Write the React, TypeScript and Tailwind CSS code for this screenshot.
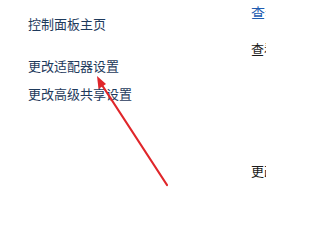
import React from 'react';

const NavLink: React.FC<{ label: string; className?: string }> = ({ label, className }) => (
    <div className={`h-[28px] leading-[28px] text-[13px] text-[#1e3a5c] whitespace-nowrap ${className ?? ''}`}>{label}</div>
);

const App: React.FC = () => (
    <div
        className="relative w-[266px] h-[217px] bg-white overflow-hidden flex"
        style={{ fontFamily: '"Noto Sans CJK SC", "Noto Sans", sans-serif' }}
    >
        <div className="w-[251px] shrink-0 pl-[28px] pt-[10px]">
            <NavLink label="控制面板主页" />
            <NavLink label="更改适配器设置" className="mt-[14px]" />
            <NavLink label="更改高级共享设置" />
        </div>
        <div className="shrink-0 flex flex-col whitespace-nowrap">
            <div className="h-[24px] leading-[24px] text-[14px] text-[#1e5bb0]">查看</div>
            <div className="mt-[13px] h-[24px] leading-[24px] text-[13px] text-[#1a1a1a]">查看</div>
            <div className="mt-[98px] h-[24px] leading-[24px] text-[13px] text-[#1a1a1a]">更改</div>
        </div>
        <svg className="absolute left-0 top-0" width="266" height="217" viewBox="0 0 266 217">
            <line x1="167" y1="185" x2="100" y2="82" stroke="#e0262a" strokeWidth="2.2" strokeLinecap="round" />
            <polygon points="97,76 98.5,89 106,84" fill="#e0262a" />
        </svg>
    </div>
);

export default App;
